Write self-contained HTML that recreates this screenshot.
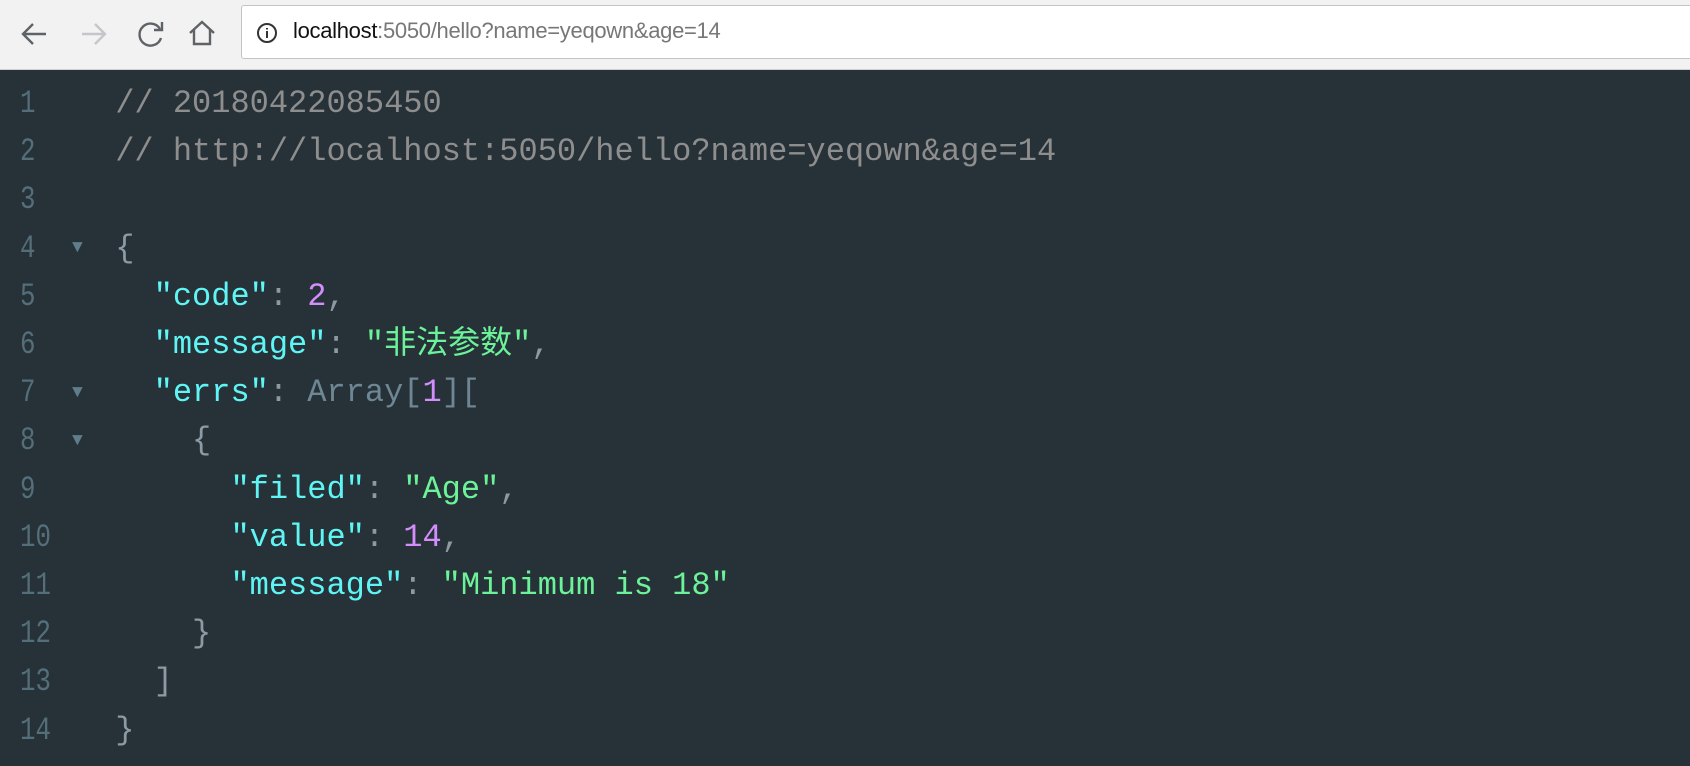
<html><head><style>
body{margin:0;width:1690px;height:766px;background:#263238;overflow:hidden;font-family:"Liberation Mono",monospace}
.tb{position:absolute;left:0;top:0;width:1690px;height:69px;background:#f2f2f2;border-bottom:1px solid #d0d0d0}
.addr{position:absolute;left:241px;top:5px;width:1460px;height:52px;background:#fff;border:1px solid #c4c4c4;border-radius:3px}
.url{position:absolute;left:293px;top:18px;font:22px "Liberation Sans",sans-serif;color:#777;letter-spacing:-0.3px}
.url b{font-weight:normal;color:#111}
.code{position:absolute;left:0;top:80px;font-size:32px;line-height:48.2px;white-space:pre;color:#8c9aa3}
.ln{position:absolute;left:20px;top:80px;font-size:32.2px;line-height:48.2px;color:#546e7a;white-space:pre;transform:scaleX(0.8);transform-origin:0 0}
.tg{position:absolute;left:72px;font-size:18px;color:#607d8b}
.c{color:#8e8e8e}.k{color:#5ff5f5}.s{color:#6cf39a}.n{color:#d38efc}.a{color:#6f8794}
</style></head><body>
<div class="tb">
<svg width="240" height="69" style="position:absolute;left:0;top:0" fill="none" stroke-width="2.4">
<path d="M46 34H24M33 24l-10 10 10 10" stroke="#5f6368"/>
<path d="M82 34h22M95 24l10 10-10 10" stroke="#c4c6c9"/>
<path d="M160 29a11 11 0 1 0 1 9" stroke="#5f6368"/><path d="M162 22v8h-8" stroke="#5f6368"/>
<path d="M190 33l12-11 12 11M194 30v14h16V30" stroke="#5f6368"/>
</svg>
<div class="addr"></div>
<svg width="24" height="24" style="position:absolute;left:256px;top:22px"><circle cx="11" cy="11" r="9" fill="none" stroke="#333" stroke-width="2"/><path d="M11 9v7M11 6v1.5" stroke="#333" stroke-width="2"/></svg>
<div class="url"><b>localhost</b>:5050/hello?name=yeqown&amp;age=14</div>
</div>
<div class="ln">1
2
3
4
5
6
7
8
9
10
11
12
13
14</div>
<div class="tg" style="top:238px">▼</div>
<div class="tg" style="top:383px">▼</div>
<div class="tg" style="top:431px">▼</div>
<div class="code"><span class="c">      // 20180422085450
      // http://localhost:5050/hello?name=yeqown&amp;age=14</span>

      {
        <span class="k">"code"</span>: <span class="n">2</span>,
        <span class="k">"message"</span>: <span class="s" style="font-family:'Liberation Mono','Noto Sans CJK SC',monospace">"非法参数"</span>,
        <span class="k">"errs"</span>: <span class="a">Array[<span class="n">1</span>][</span>
          {
            <span class="k">"filed"</span>: <span class="s">"Age"</span>,
            <span class="k">"value"</span>: <span class="n">14</span>,
            <span class="k">"message"</span>: <span class="s">"Minimum is 18"</span>
          }
        ]
      }</div>
</body></html>
